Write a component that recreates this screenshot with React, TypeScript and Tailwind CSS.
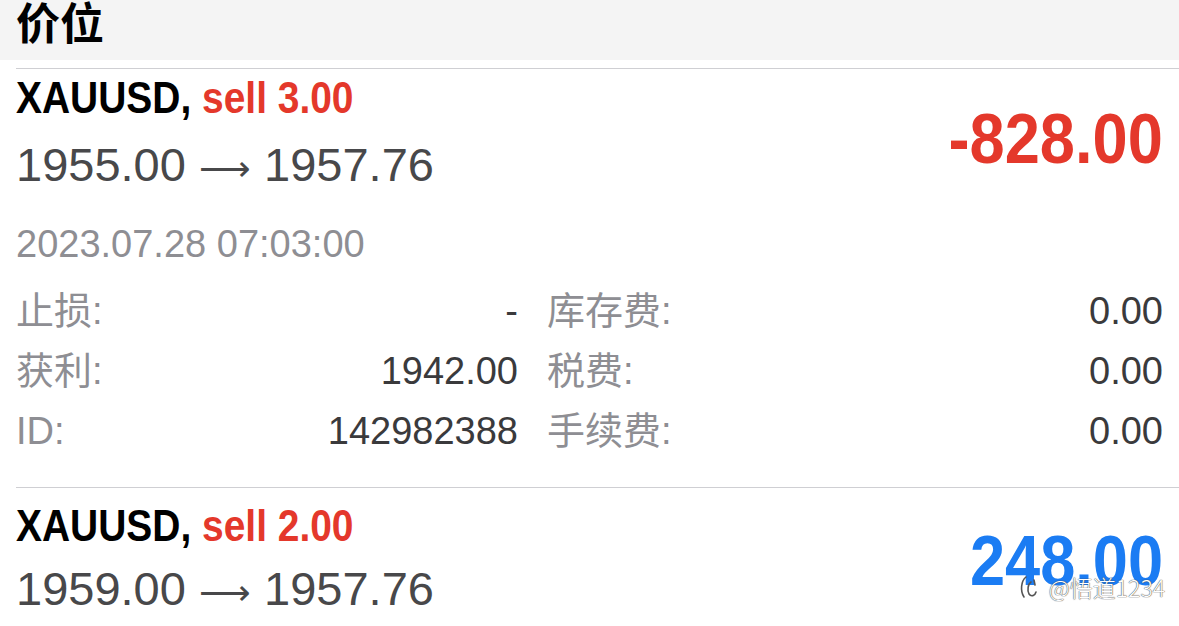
import React from "react";

type Position = {
    symbol: string;
    side: string;
    open: string;
    current: string;
    profit: string;
    positive: boolean;
};

function Row({ label, value, label2, value2 }: { label: string; value: string; label2: string; value2: string }) {
    return (
        <div className="grid grid-cols-[502px_1fr] gap-x-[29px] leading-[60px] text-[38px]">
            <div className="flex justify-between">
                <span className="text-[#8e8e93]">{label}</span>
                <span className="text-[#3a3a3c]">{value}</span>
            </div>
            <div className="flex justify-between">
                <span className="text-[#8e8e93]">{label2}</span>
                <span className="text-[#3a3a3c]">{value2}</span>
            </div>
        </div>
    );
}

function Header({ position, gap }: { position: Position; gap: string }) {
    return (
        <>
            <div className="font-bold text-[45px] leading-[50px] whitespace-nowrap">
                <span className="inline-block origin-left scale-x-[0.865]">
                    <span className="text-black">{position.symbol}, </span>
                    <span className="text-[#e4382b]">{position.side}</span>
                </span>
            </div>
            <div className={`${gap} text-[47px] leading-[50px] text-[#48484a] whitespace-nowrap`}>
                {position.open} <span className="font-['DejaVu_Sans',sans-serif] font-extralight text-[36px]">⟶</span> {position.current}
            </div>
        </>
    );
}

function Profit({ value, positive, top }: { value: string; positive: boolean; top: string }) {
    return (
        <div className={`${top} font-bold text-[71px] leading-[100px] ${positive ? "text-[#1b7cf3]" : "text-[#e4382b]"}`}>
            <span className="inline-block origin-right scale-x-[0.89]">{value}</span>
        </div>
    );
}

export default function App() {
    const first: Position = { symbol: "XAUUSD", side: "sell 3.00", open: "1955.00", current: "1957.76", profit: "-828.00", positive: false };
    const second: Position = { symbol: "XAUUSD", side: "sell 2.00", open: "1959.00", current: "1957.76", profit: "248.00", positive: true };

    return (
        <div className="relative w-[1179px] h-[626px] overflow-hidden bg-white font-['Liberation_Sans','Noto_Sans_CJK_SC',sans-serif]">
            <div className="h-[60px] bg-[#f4f4f4] pl-4">
                <div className="text-[44px] leading-[42px] font-bold text-black font-['Noto_Sans_CJK_SC',sans-serif]">价位</div>
            </div>
            <div className="h-[8px]" />
            <div className="ml-4 border-t border-[#cfcfd3]" />

            {/* first position */}
            <div className="pl-4 pr-4 flex justify-between">
                <div className="w-full">
                    <div className="mt-[4px]">
                        <Header position={first} gap="mt-[17px]" />
                    </div>
                    <div className="mt-[25px] text-[38px] leading-[50px] text-[#8e8e93]">2023.07.28 07:03:00</div>
                    <div className="mt-[12px] mb-[26px]">
                        <Row label="止损:" value="-" label2="库存费:" value2="0.00" />
                        <Row label="获利:" value="1942.00" label2="税费:" value2="0.00" />
                        <Row label="ID:" value="142982388" label2="手续费:" value2="0.00" />
                    </div>
                </div>
                <div className="absolute right-4 top-[89px]">
                    <Profit value={first.profit} positive={first.positive} top="" />
                </div>
            </div>

            <div className="ml-4 border-t border-[#cfcfd3]" />

            {/* second position */}
            <div className="relative pl-4 pr-4 flex justify-between">
                <div>
                    <div className="mt-[13px]">
                        <Header position={second} gap="mt-[13px]" />
                    </div>
                    <div className="h-[8px]" />
                </div>
                <Profit value={second.profit} positive={second.positive} top="mt-[23px]" />
            </div>
            <div className="ml-4 border-t border-[#cfcfd3]" />

            {/* watermark */}
            <div className="absolute right-[14px] top-[573px] flex items-center gap-[8px] text-[23px] leading-[28px] text-white [text-shadow:0_0_1px_#444,0_0_1px_#444]">
                <svg width="22" height="26" viewBox="0 0 22 26" fill="none" stroke="#555" strokeWidth="1.6" strokeLinecap="round">
                    <path d="M7 3 C2 7 1 17 5 23" />
                    <path d="M12 8 C9 10 8 16 10 20 C12 23 16 22 17 18" />
                    <path d="M15 6 L16 11" />
                </svg>
                <span className="font-['Noto_Sans_CJK_SC',sans-serif] font-light">@悟道1234</span>
            </div>
        </div>
    );
}
